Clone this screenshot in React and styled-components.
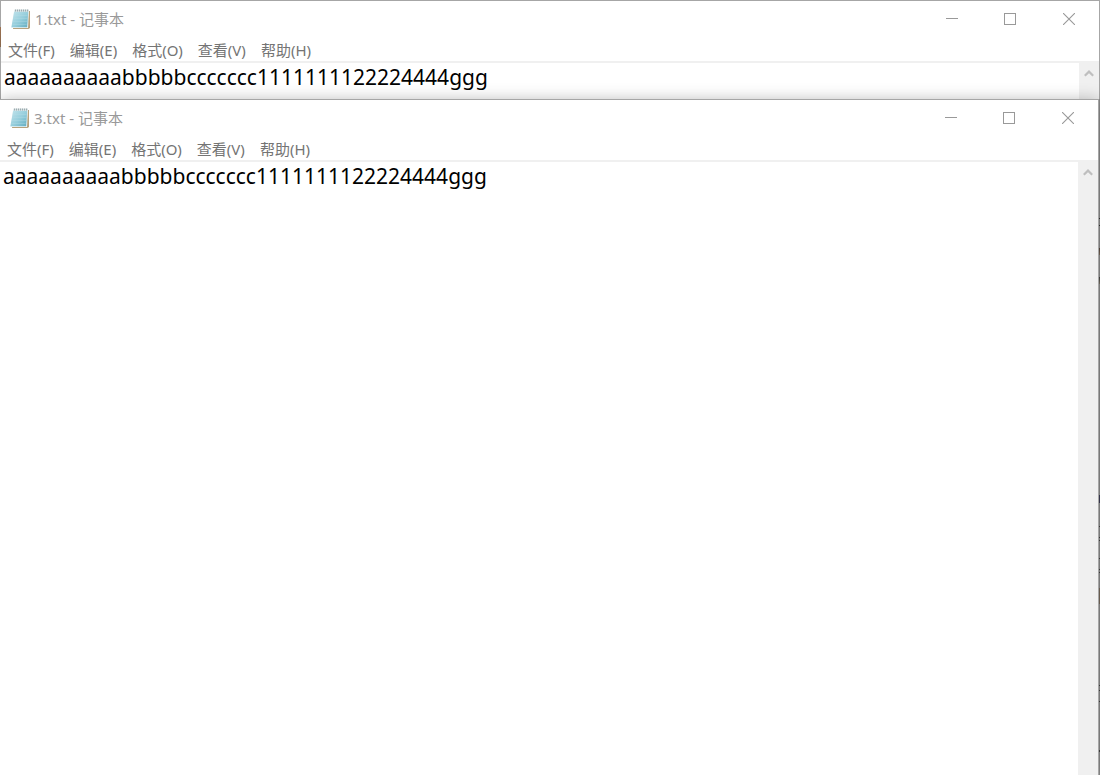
import React from "react";
import styled, { createGlobalStyle } from "styled-components";

const GlobalStyle = createGlobalStyle`
  *, *::before, *::after { box-sizing: border-box; }
  body {
    margin: 0;
    background: #858585;
    font-family: "Noto Sans", "Noto Sans CJK SC", sans-serif;
    font-size: 15px;
  }
`;

const Desktop = styled.main`
  display: flex;
  flex-direction: column;
  min-height: 100vh;
  overflow: hidden;
  background:
    linear-gradient(#333, #333) right 218px / 1px 1px no-repeat,
    linear-gradient(#333, #333) right 225px / 1px 1px no-repeat,
    linear-gradient(#54453a, #7d6b5c) right 248px / 1px 7px no-repeat,
    linear-gradient(#3f3f3f, #7d7566) right 277px / 1px 7px no-repeat,
    linear-gradient(#3c3c55, #3c3c55) right 495px / 1px 8px no-repeat,
    linear-gradient(#444, #444) right 526px / 1px 1px no-repeat,
    linear-gradient(#444, #444) right 537px / 1px 1px no-repeat,
    linear-gradient(#444, #444) right 540px / 1px 1px no-repeat,
    linear-gradient(#444, #444) right 558px / 1px 1px no-repeat,
    linear-gradient(#444, #444) right 569px / 1px 1px no-repeat,
    linear-gradient(#444, #444) right 572px / 1px 1px no-repeat,
    linear-gradient(#776a5c, #776a5c) right 588px / 1px 16px no-repeat,
    linear-gradient(#444, #444) right 685px / 1px 1px no-repeat,
    linear-gradient(#444, #444) right 690px / 1px 1px no-repeat,
    linear-gradient(#444, #444) right 701px / 1px 1px no-repeat,
    linear-gradient(#444, #444) right 750px / 1px 2px no-repeat,
    #8c8c8c;
`;

const Frame = styled.section`
  display: flex;
  flex-direction: column;
  background: #fff;
  border-top: 1px solid #a6a6a6;
  border-right: 1px solid #a6a6a6;
`;

const BackWindow = styled(Frame)`
  padding-left: 1px;
  background:
    linear-gradient(#a6a6a6 26px, #9a7050 26px, #86664c 46px, #a6a6a6 46px) left / 1px 100% no-repeat,
    #fff;
`;

const FrontWindow = styled(Frame)`
  position: relative;
  flex: 1;
  margin-right: 1px;
  box-shadow: 0 1px 15px rgba(0, 0, 0, 0.28);
`;

const TitleBar = styled.header`
  display: flex;
  align-items: center;
  height: 36px;
  padding-left: 8px;
`;

const Title = styled.h1`
  flex: 1;
  margin: 0 0 0 4px;
  color: #999;
  font-size: 15px;
  font-weight: 400;
  line-height: 36px;
`;

const CaptionButton = styled.button`
  display: grid;
  place-items: center;
  width: ${(p) => (p.$wide ? 60 : 58)}px;
  height: 36px;
  padding: 0;
  border: 0;
  background: none;
  color: #999;
`;

const MenuBar = styled.nav`
  display: flex;
  gap: 15px;
  height: 24px;
  padding-left: 7px;
`;

const MenuItem = styled.button`
  height: 27px;
  padding: 0;
  border: 0;
  background: none;
  color: #747474;
  font: inherit;
  line-height: 27px;
`;

const Body = styled.div`
  display: flex;
  flex: 1;
  border-top: 2px solid #f0f0f0;
`;

const Editor = styled.textarea`
  flex: 1;
  min-width: 0;
  height: ${(p) => (p.$fill ? "auto" : "36px")};
  padding: 0 3px;
  border: 0;
  outline: 0;
  resize: none;
  overflow: hidden;
  background: #fff;
  color: #000;
  font-family: inherit;
  font-size: 21px;
  line-height: 28px;
`;

const ScrollTrack = styled.div`
  width: 20px;
  background: #f0f0f0;
`;

const ScrollButton = styled.button`
  display: grid;
  place-items: center;
  width: 20px;
  height: 20px;
  padding: 0;
  border: 0;
  background: none;
`;

function NotepadIcon() {
  return (
    <svg width="22" height="22" viewBox="0 0 22 22" aria-hidden="true">
      <defs>
        <linearGradient id="page" x1="0" y1="0" x2="1" y2="1">
          <stop offset="0" stopColor="#c3e4ec" />
          <stop offset="0.55" stopColor="#94cddb" />
          <stop offset="1" stopColor="#62adc1" />
        </linearGradient>
      </defs>
      <path d="M6 3H21V20L19.5 21H4z" fill="#b7a27e" />
      <path d="M5 2.5H20L19 20H2.2z" fill="#edf5f7" />
      <path d="M5.2 3.5H19.2L18.2 19.3H2.4z" fill="url(#page)" />
      <path d="M5 7.5h13.5M4.5 10.5h14M4 13.5h14M3.5 16.5h14" stroke="#b7dde6" strokeWidth="0.7" opacity=".5" />
      <path d="M5.5 2.5H20" stroke="#d8e1e3" strokeWidth="2" />
      <path d="M6.5 1.5v2M8.5 1.5v2M10.5 1.5v2M12.5 1.5v2M14.5 1.5v2M16.5 1.5v2M18.5 1.5v2" stroke="#8e9ea3" strokeWidth="0.8" />
    </svg>
  );
}

function NotepadWindow({ as: Shell, name, text, fill }) {
  return (
    <Shell aria-label={name}>
      <TitleBar>
        <NotepadIcon />
        <Title>{name} - 记事本</Title>
        <CaptionButton aria-label="最小化">
          <svg width="12" height="12" shapeRendering="crispEdges">
            <path d="M0 5.5H12" stroke="currentColor" />
          </svg>
        </CaptionButton>
        <CaptionButton aria-label="最大化">
          <svg width="12" height="12" shapeRendering="crispEdges">
            <path d="M.5 .5H11.5V11.5H.5z" fill="none" stroke="currentColor" />
          </svg>
        </CaptionButton>
        <CaptionButton $wide aria-label="关闭">
          <svg width="12" height="12">
            <path d="M0 0L12 12M12 0L0 12" stroke="currentColor" strokeWidth="1.1" />
          </svg>
        </CaptionButton>
      </TitleBar>
      <MenuBar>
        {["文件(F)", "编辑(E)", "格式(O)", "查看(V)", "帮助(H)"].map((label) => (
          <MenuItem key={label}>{label}</MenuItem>
        ))}
      </MenuBar>
      <Body>
        <Editor $fill={fill} aria-label={name} spellCheck={false} defaultValue={text} />
        <ScrollTrack>
          <ScrollButton aria-label="向上滚动">
            <svg width="10" height="8">
              <path d="M.8 6.8L5 2.6L9.2 6.8" fill="none" stroke="#bfbfbf" strokeWidth="2.2" />
            </svg>
          </ScrollButton>
        </ScrollTrack>
      </Body>
    </Shell>
  );
}

const content = "aaaaaaaaaabbbbbccccccc1111111122224444ggg";

export default function App() {
  return (
    <>
      <GlobalStyle />
      <Desktop>
        <NotepadWindow as={BackWindow} name="1.txt" text={content} />
        <NotepadWindow as={FrontWindow} name="3.txt" text={content} fill />
      </Desktop>
    </>
  );
}
